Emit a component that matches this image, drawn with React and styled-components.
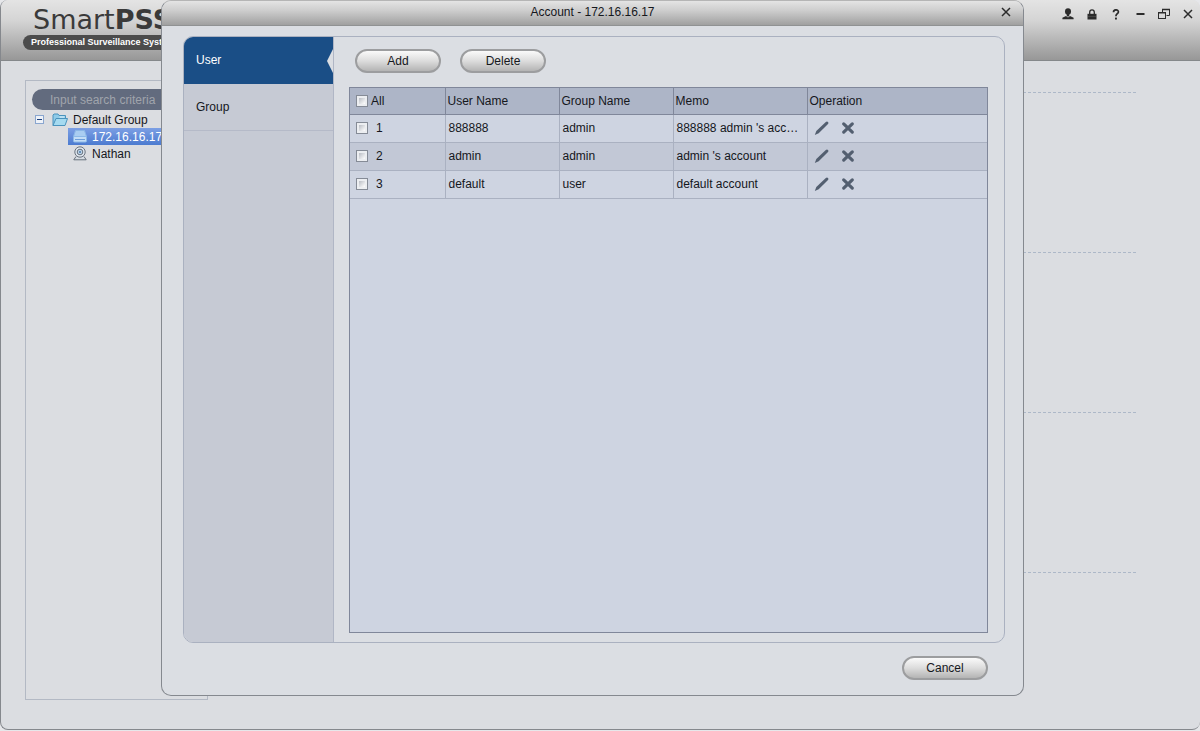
import { useState } from "react";
import styled, { createGlobalStyle, css } from "styled-components";

const USERS = [
  { id: 1, name: "888888", group: "admin", memo: "888888 admin 's account" },
  { id: 2, name: "admin", group: "admin", memo: "admin 's account" },
  { id: 3, name: "default", group: "user", memo: "default account" },
];

const PersonIcon = () => (
  <svg width="12" height="12" viewBox="0 0 12 12" fill="#2b2b2b" aria-hidden="true">
    <ellipse cx="6" cy="3.6" rx="3" ry="3.3" />
    <path d="M4.800 6h2.400v1.600L6 9 4.800 7.600z" />
    <path d="M.4 11.200V9.800L4 8l2 1.500L8 8l3.600 1.800v1.400z" />
  </svg>
);

const LockIcon = () => (
  <svg width="10" height="11" viewBox="0 0 10 11" aria-hidden="true">
    <path d="M2.700 5V3.200a2.300 2.300 0 0 1 4.600 0V5" fill="none" stroke="#2b2b2b" strokeWidth="1.300" />
    <rect x="0.500" y="4.800" width="9" height="5.700" fill="#2b2b2b" />
    <path d="M1 7.500h8" stroke="#555" strokeWidth="0.600" />
  </svg>
);

const HelpIcon = () => (
  <svg width="8" height="11" viewBox="0 0 8 11" aria-hidden="true">
    <path d="M1.500 3.200C1.500 0 6.500 .2 6.400 2.900 6.400 4.700 3.900 4.800 3.900 7.200" fill="none" stroke="#2b2b2b" strokeWidth="1.700" />
    <rect x="3" y="8.600" width="1.900" height="1.900" fill="#2b2b2b" />
  </svg>
);

const MinimizeIcon = () => (
  <svg width="9" height="10" viewBox="0 0 9 10" aria-hidden="true">
    <rect x="0.500" y="4" width="8" height="2" fill="#2b2b2b" />
  </svg>
);

const RestoreIcon = () => (
  <svg width="12" height="12" viewBox="0 0 12 12" fill="none" stroke="#2b2b2b" aria-hidden="true">
    <path d="M4.500 4V1.500h7v6h-3" />
    <path d="M4 1.500h8" strokeWidth="1.600" />
    <rect x="0.500" y="4.500" width="7" height="6" />
    <path d="M0 4.800h8" strokeWidth="1.600" />
  </svg>
);

const CloseIcon = () => (
  <svg width="10" height="10" viewBox="0 0 10 10" aria-hidden="true">
    <path d="M1 1l8 8M9 1l-8 8" stroke="#2b2b2b" strokeWidth="1.500" />
  </svg>
);

const FolderIcon = () => (
  <svg width="16" height="14" viewBox="0 0 16 14" aria-hidden="true">
    <path d="M1 12.500V2l1-1h4l1 1.500h6.500V6" fill="#8fcbe8" stroke="#4a93bd" />
    <path d="M1 12.500 4 5.500h11.500l-2.500 7z" fill="#a5daf0" stroke="#4a93bd" />
    <path d="M7.500 4h5" stroke="#e9f6fc" />
  </svg>
);

const DeviceIcon = () => (
  <svg width="14" height="13" viewBox="0 0 14 13" aria-hidden="true">
    <path d="M2.500.5h9l2 6h-13z" fill="#a9cdf1" stroke="#8ab6e6" />
    <rect x="0.500" y="6.500" width="13" height="5.500" rx="1" fill="#c3ddf6" stroke="#8bb9e8" />
    <path d="M2 9.500h10" stroke="#6c9edb" />
  </svg>
);

const CameraIcon = () => (
  <svg width="14" height="15" viewBox="0 0 14 15" fill="none" aria-hidden="true">
    <path d="M3 10.500.8 13.800h12.400L11 10.500" fill="#d5dbe2" stroke="#69727e" />
    <circle cx="7" cy="6" r="5.200" fill="#dfe6ee" stroke="#69727e" />
    <circle cx="7" cy="6" r="2.800" fill="#bcd3e8" stroke="#69727e" />
    <circle cx="7" cy="6" r="1" fill="#4a78a8" />
  </svg>
);

const PencilIcon = () => (
  <svg width="16" height="16" viewBox="0 0 16 16" fill="#535f70" aria-hidden="true">
    <path d="M.8 15 2.300 11 11.800 1.900q1.200-1 2.200 0t0 2.200L4.700 13.300z" />
  </svg>
);

const RemoveIcon = () => (
  <svg width="14" height="14" viewBox="0 0 14 14" aria-hidden="true">
    <path d="M2.700 2.900l8.600 8.200M11.300 2.900l-8.600 8.200" stroke="#535f70" strokeWidth="3.200" strokeLinecap="round" />
  </svg>
);

export default function App() {
  const [tab, setTab] = useState("User");
  const [checked, setChecked] = useState([]);

  const toggle = (id) =>
    setChecked(
      checked.includes(id) ? checked.filter((c) => c !== id) : [...checked, id]
    );

  const toggleAll = () =>
    setChecked(checked.length === USERS.length ? [] : USERS.map((u) => u.id));

  return (
    <>
      <GlobalStyle />
      <Window>
        <Header>
          <Brand>
            <Logo>
              Smart<b>PSS</b>
            </Logo>
            <Tagline>Professional Surveillance System</Tagline>
          </Brand>
          <WindowControls>
            <IconButton aria-label="Switch user"><PersonIcon /></IconButton>
            <IconButton aria-label="Lock"><LockIcon /></IconButton>
            <IconButton aria-label="Help"><HelpIcon /></IconButton>
            <IconButton aria-label="Minimize"><MinimizeIcon /></IconButton>
            <IconButton aria-label="Restore"><RestoreIcon /></IconButton>
            <IconButton aria-label="Close"><CloseIcon /></IconButton>
          </WindowControls>
        </Header>
        <Main>
          <Sidebar>
            <Search type="search" placeholder="Input search criteria" aria-label="Search devices" />
            <TreeItem>
              <Toggle aria-label="Collapse group" />
              <FolderIcon />
              Default Group
            </TreeItem>
            <TreeItem $nested $selected>
              <DeviceIcon />
              172.16.16.17
            </TreeItem>
            <TreeItem $nested>
              <CameraIcon />
              Nathan
            </TreeItem>
          </Sidebar>
          <Sections>
            <Section />
            <Section />
            <Section />
            <Section />
          </Sections>
        </Main>
      </Window>

      <Overlay>
        <Dialog role="dialog" aria-labelledby="dialog-title">
          <TitleBar>
            <Title id="dialog-title">Account - 172.16.16.17</Title>
            <IconButton aria-label="Close dialog"><CloseIcon /></IconButton>
          </TitleBar>
          <Panel>
            <Tabs>
              {["User", "Group"].map((name) => (
                <Tab key={name} $active={tab === name} onClick={() => setTab(name)}>
                  {name}
                </Tab>
              ))}
            </Tabs>
            <Content>
              <Toolbar>
                <Button>Add</Button>
                <Button>Delete</Button>
              </Toolbar>
              <TableFrame>
                <Table>
                  <colgroup>
                    <Col $width={95} />
                    <Col $width={114} />
                    <Col $width={114} />
                    <Col $width={134} />
                    <Col />
                  </colgroup>
                  <thead>
                    <tr>
                      <Th>
                        <CheckLabel>
                          <Checkbox
                            type="checkbox"
                            checked={checked.length === USERS.length}
                            onChange={toggleAll}
                          />
                          All
                        </CheckLabel>
                      </Th>
                      <Th>User Name</Th>
                      <Th>Group Name</Th>
                      <Th>Memo</Th>
                      <Th>Operation</Th>
                    </tr>
                  </thead>
                  <tbody>
                    {USERS.map((user) => (
                      <Row key={user.id}>
                        <Td>
                          <CheckLabel $wide>
                            <Checkbox
                              type="checkbox"
                              checked={checked.includes(user.id)}
                              onChange={() => toggle(user.id)}
                            />
                            {user.id}
                          </CheckLabel>
                        </Td>
                        <Td>{user.name}</Td>
                        <Td>{user.group}</Td>
                        <Td>{user.memo}</Td>
                        <Td>
                          <Actions>
                            <IconButton aria-label={`Edit ${user.name}`}><PencilIcon /></IconButton>
                            <IconButton aria-label={`Delete ${user.name}`}><RemoveIcon /></IconButton>
                          </Actions>
                        </Td>
                      </Row>
                    ))}
                  </tbody>
                </Table>
              </TableFrame>
            </Content>
          </Panel>
          <Footer>
            <Button>Cancel</Button>
          </Footer>
        </Dialog>
      </Overlay>
    </>
  );
}

const GlobalStyle = createGlobalStyle`
  * {
    box-sizing: border-box;
  }

  body {
    margin: 0;
    background: #e6e7ea;
    color: #15171c;
    font: 12px/16px "Liberation Sans", Arial, sans-serif;
  }

  button,
  input {
    font: inherit;
    color: inherit;
  }
`;

const Window = styled.div`
  display: flex;
  flex-direction: column;
  min-height: calc(100vh - 1px);
  border: solid #85888d;
  border-width: 0 0 1px 1px;
  border-radius: 8px;
  overflow: hidden;
  background: #dbdde1;
`;

const Header = styled.header`
  display: flex;
  justify-content: space-between;
  height: 61px;
  border-bottom: 1px solid #85888b;
  background: linear-gradient(#e4e4e4, #d4d4d4 35%, #979797);
`;

const Brand = styled.div`
  padding: 5px 0 0 22px;
`;

const Logo = styled.div`
  padding-left: 10px;
  font: 27px/30px "DejaVu Sans", Verdana, sans-serif;
  color: #3a3a3a;
`;

const Tagline = styled.div`
  height: 15px;
  padding: 0 8px;
  border-radius: 8px;
  background: #4c4c4c;
  color: #fff;
  font-size: 9px;
  line-height: 15px;
  font-weight: bold;
`;

const WindowControls = styled.div`
  display: flex;
  align-items: flex-start;
  gap: 8px;
  padding: 6px 4px 0 0;
`;

const IconButton = styled.button`
  display: flex;
  align-items: center;
  justify-content: center;
  width: 16px;
  height: 16px;
  padding: 0;
  border: 0;
  background: none;
`;

const Main = styled.main`
  display: flex;
  flex: 1;
  padding: 19px 64px 29px 24px;
`;

const Sidebar = styled.aside`
  width: 183px;
  padding: 8px 6px;
  border: 1px solid #b3b9c4;
`;

const Search = styled.input`
  width: 100%;
  height: 21px;
  margin-bottom: 1px;
  padding: 0 18px;
  border: 0;
  border-radius: 11px;
  background: #626b7e;

  &::placeholder {
    color: #a0a4ac;
    opacity: 1;
  }
`;

const TreeItem = styled.div`
  display: flex;
  align-items: center;
  gap: 5px;
  height: 17px;
  margin-left: ${(p) => (p.$nested ? 36 : 3)}px;
  padding-left: ${(p) => (p.$nested ? 5 : 0)}px;
  white-space: nowrap;
  ${(p) =>
    p.$selected &&
    css`
      background: linear-gradient(#7c9fe4, #4c7bd0);
      color: #fff;
    `}
`;

const Toggle = styled.button`
  width: 9px;
  height: 9px;
  margin-right: 3px;
  padding: 0;
  border: 1px solid #8aa6cf;
  background: linear-gradient(#1b3f7c, #1b3f7c) center / 5px 1px no-repeat #eef2f8;
`;

const Sections = styled.div`
  flex: 1;
  padding-top: 12px;
`;

const Section = styled.section`
  height: 160px;
  border-top: 1px dashed #adb8c8;

  &:last-child {
    height: auto;
  }
`;

const Overlay = styled.div`
  position: absolute;
  inset: 0;
  display: flex;
  padding: 0 176px 35px 161px;
`;

const Dialog = styled.div`
  display: flex;
  flex: 1;
  flex-direction: column;
  border: 1px solid #85898f;
  border-top-color: #b5b5b5;
  border-radius: 10px;
  overflow: hidden;
  background: #dbdee3;
`;

const TitleBar = styled.div`
  display: grid;
  grid-template-columns: 1fr auto 1fr;
  align-items: center;
  height: 25px;
  padding: 0 9px 2px;
  border-bottom: 1px solid #909293;
  background: linear-gradient(#e4e4e4, #cdcdcd 40%, #a0a0a0);

  ${IconButton} {
    justify-self: end;
  }
`;

const Title = styled.h1`
  grid-column: 2;
  margin: 0;
  font-size: 12px;
  line-height: 16px;
  font-weight: normal;
`;

const Panel = styled.div`
  display: flex;
  flex: 1;
  margin: 10px 18px 0 21px;
  border: 1px solid #aab1c0;
  border-radius: 10px;
  overflow: hidden;
`;

const Tabs = styled.nav`
  width: 150px;
  border-right: 1px solid #b0b6c5;
  background: #c6cad4;
`;

const Tab = styled.button`
  position: relative;
  display: block;
  width: 100%;
  height: 47px;
  padding: 0 12px;
  border: 0;
  border-bottom: 1px solid #b5bac8;
  background: none;
  text-align: left;
  ${(p) =>
    p.$active &&
    css`
      border-color: #1a4e86;
      background: #1a4e86;
      color: #fff;

      &::after {
        content: "";
        position: absolute;
        top: 12px;
        right: 0;
        width: 6px;
        height: 24px;
        background: #dbdee3;
        clip-path: polygon(100% 0, 0 50%, 100% 100%);
      }
    `}
`;

const Content = styled.div`
  display: flex;
  flex: 1;
  flex-direction: column;
  min-width: 0;
  padding: 12px 16px 9px 15px;
`;

const Toolbar = styled.div`
  display: flex;
  gap: 19px;
  padding: 0 6px 14px;
`;

const Button = styled.button`
  width: 86px;
  height: 24px;
  padding: 0;
  border: 2px solid #9c9d9f;
  border-radius: 12px;
  background: linear-gradient(#fafafa, #dcdcdc 50%, #b4b4b4);
`;

const TableFrame = styled.div`
  flex: 1;
  border: 1px solid #80879a;
  background: #ced4e1;
`;

const Table = styled.table`
  width: 100%;
  table-layout: fixed;
  border-collapse: collapse;
`;

const Col = styled.col`
  ${(p) => p.$width && `width: ${p.$width}px;`}
`;

const Th = styled.th`
  height: 26px;
  padding: 0 2px;
  border: solid #80879a;
  border-width: 0 1px 1px 0;
  background: #adb5c7;
  font-weight: normal;
  text-align: left;

  &:last-child {
    border-right: 0;
  }
`;

const Td = styled.td`
  height: 28px;
  padding: 0 3px;
  border: solid #aab1c1;
  border-width: 0 1px 1px 0;
  overflow: hidden;
  text-overflow: ellipsis;
  white-space: nowrap;

  &:last-child {
    border-right: 0;
  }
`;

const Row = styled.tr`
  &:nth-child(even) {
    background: #c2c8d6;
  }
`;

const CheckLabel = styled.label`
  display: flex;
  align-items: center;
  gap: ${(p) => (p.$wide ? 8 : 3)}px;
  padding-left: ${(p) => (p.$wide ? 3 : 4)}px;
`;

const Checkbox = styled.input`
  appearance: none;
  width: 12px;
  height: 12px;
  margin: 0;
  border: 1px solid #858b96;
  background: linear-gradient(135deg, #b9bdc4, #fff) center / 6px 6px no-repeat #eceef1;

  &:checked {
    background: #1a4e86;
  }
`;

const Actions = styled.div`
  display: flex;
  gap: 10px;
  padding-left: 3px;
`;

const Footer = styled.div`
  display: flex;
  justify-content: flex-end;
  padding: 13px 35px 15px;
`;
